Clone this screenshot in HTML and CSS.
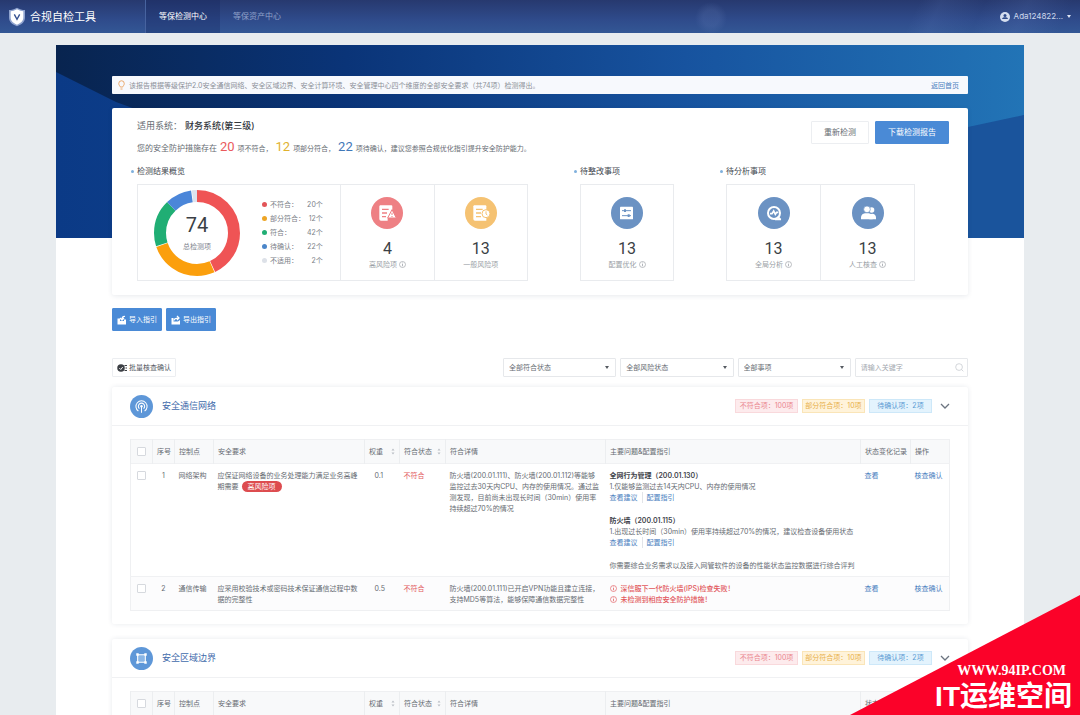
FILE: index.html
```html
<!DOCTYPE html>
<html lang="zh-CN">
<head>
<meta charset="utf-8">
<title>合规自检工具</title>
<link rel="stylesheet" href="styles.css">
</head>
<body>
<svg class="symbols" aria-hidden="true">
  <symbol id="info" viewBox="0 0 14 14"><circle cx="7" cy="7" r="6" fill="none" stroke="currentColor" stroke-width="1.3"/><path d="M7 6v4.5M7 3.2v1.5" stroke="currentColor" stroke-width="1.5"/></symbol>
  <symbol id="sort" viewBox="0 0 8 14"><path d="M1 5l3-4 3 4zM1 9l3 4 3-4z" fill="#b9bdc4"/></symbol>
  <symbol id="chevron" viewBox="0 0 10 10"><path d="M1 3l4 4 4-4" fill="none" stroke="#6c7480" stroke-width="1.3"/></symbol>
</svg>

<header class="topbar">
  <div class="brand">
    <svg class="brand-logo" viewBox="0 0 54 60" aria-hidden="true">
      <path d="M27 2C19 7 11 9 3 9v22c0 14 10 22 24 27 14-5 24-13 24-27V9c-8 0-16-2-24-7z" fill="#8fa3cf"/>
      <path d="M27 7c-7 4-13 5-19 6v18c0 11 7 17 19 22 12-5 19-11 19-22V13c-6-1-12-2-19-6z" fill="#fff"/>
      <path d="M19 22l8 15 8-15" fill="none" stroke="#34508f" stroke-width="4"/>
    </svg>
    <h1>合规自检工具</h1>
  </div>
  <nav class="nav">
    <a class="nav-item active" href="#">等保检测中心</a>
    <a class="nav-item" href="#">等保资产中心</a>
  </nav>
  <button class="user" type="button">
    <svg class="user-icon" viewBox="0 0 20 20" aria-hidden="true"><circle cx="10" cy="10" r="10" fill="#d5deef"/><circle cx="10" cy="7" r="3" fill="#2f4b8a"/><path d="M4 14c1-3 3-3.500 6-3.500s5 .5 6 3.500z" fill="#2f4b8a"/></svg>
    Ada124822...
    <span class="caret"></span>
  </button>
</header>

<main class="page">
  <svg class="hero" viewBox="0 0 968 193" preserveAspectRatio="none" aria-hidden="true">
    <defs>
      <linearGradient id="sky" x1="0" y1="0" x2="1" y2="0"><stop offset="0" stop-color="#08244f"/><stop offset=".3" stop-color="#0a3478"/><stop offset=".65" stop-color="#17539f"/><stop offset="1" stop-color="#2274b6"/></linearGradient>
      <linearGradient id="slope" x1="0" y1="0" x2="1" y2="0"><stop offset="0" stop-color="#0b3a86"/><stop offset="1" stop-color="#1a569f"/></linearGradient>
    </defs>
    <path d="M0 0h968v193H0z" fill="url(#sky)"/>
    <path d="M0 27l60 30 220 80h540l148-67v123H0z" fill="url(#slope)"/>
    <path d="M912 82l56-12v123h-56z" fill="#1a549c"/>
  </svg>

  <div class="notice">
    <svg class="bulb" viewBox="0 0 14 20" aria-hidden="true"><path d="M4.500 14c0-2-3-3-3-7a5.500 5.500 0 0 1 11 0c0 4-3 5-3 7zM5 18h4" fill="none" stroke="#e9a25e" stroke-width="1.800"/></svg>
    <p>该报告根据等级保护2.0安全通信网络、安全区域边界、安全计算环境、安全管理中心四个维度的全部安全要求（共74项）检测得出。</p>
    <a href="#">返回首页</a>
  </div>

  <section class="summary">
    <div class="summary-head">
      <div>
        <p class="system">适用系统：<strong>财务系统(第三级)</strong></p>
        <p class="result"><span class="lead">您的安全防护措施存在</span> <b class="red">20</b> 项不符合， <b class="gold">12</b> 项部分符合， <b class="blue">22</b> 项待确认，建议您参照合规优化指引提升安全防护能力。</p>
      </div>
      <div class="actions">
        <button class="btn" type="button">重新检测</button>
        <button class="btn primary" type="button">下载检测报告</button>
      </div>
    </div>

    <div class="groups">
      <section class="group group-overview">
        <h2>检测结果概览</h2>
        <div class="cells">
          <div class="cell overview">
            <div class="donut">
              <svg viewBox="0 0 86 86" aria-hidden="true">
                <g fill="none" stroke-width="12" transform="rotate(-90 43 43)">
                  <circle cx="43" cy="43" r="37" pathLength="360" stroke="#ef5455" stroke-dasharray="155 205"/>
                  <circle cx="43" cy="43" r="37" pathLength="360" stroke="#fb9f0d" stroke-dasharray="95 265" stroke-dashoffset="-156"/>
                  <circle cx="43" cy="43" r="37" pathLength="360" stroke="#20ae74" stroke-dasharray="64 296" stroke-dashoffset="-252"/>
                  <circle cx="43" cy="43" r="37" pathLength="360" stroke="#4b86d9" stroke-dasharray="36 324" stroke-dashoffset="-316"/>
                  <circle cx="43" cy="43" r="37" pathLength="360" stroke="#dde3ee" stroke-dasharray="7 353" stroke-dashoffset="-353"/>
                </g>
              </svg>
              <div class="donut-text"><b>74</b><span>总检测项</span></div>
            </div>
            <dl class="legend">
              <dt class="k-red">不符合：</dt><dd>20个</dd>
              <dt class="k-orange">部分符合：</dt><dd>12个</dd>
              <dt class="k-green">符合：</dt><dd>42个</dd>
              <dt class="k-blue">待确认：</dt><dd>22个</dd>
              <dt class="k-gray">不适用：</dt><dd>2个</dd>
            </dl>
          </div>
          <div class="cell">
            <svg class="cell-icon" viewBox="0 0 96 96" aria-hidden="true"><circle cx="48" cy="48" r="48" fill="#ee8084"/><path d="M27 25h34a3 3 0 0 1 3 3v10L50 63v8H30q-5 0-5-5V28z" fill="#fff"/><path d="M33 37h20M33 48h15M33 59h12" stroke="#ee8084" stroke-width="4"/><path d="M63 38l13 25H50z" fill="#fff" stroke="#ee8084" stroke-width="3" stroke-linejoin="round"/><path d="M63 47v7M63 57v3" stroke="#ee8084" stroke-width="3"/></svg>
            <b>4</b><span class="label">高风险项 <svg class="info"><use href="#info"/></svg></span>
          </div>
          <div class="cell">
            <svg class="cell-icon" viewBox="0 0 96 96" aria-hidden="true"><circle cx="48" cy="48" r="48" fill="#f5c272"/><path d="M27 25h34a3 3 0 0 1 3 3v43H30q-5 0-5-5V28z" fill="#fff"/><path d="M33 37h20M33 48h15M33 59h15" stroke="#f5c272" stroke-width="4"/><circle cx="63" cy="50" r="12" fill="#fff" stroke="#f5c272" stroke-width="3"/><path d="M63 43v8l4 3" fill="none" stroke="#f5c272" stroke-width="3"/></svg>
            <b>13</b><span class="label">一般风险项</span>
          </div>
        </div>
      </section>

      <section class="group group-fix">
        <h2>待整改事项</h2>
        <div class="cells">
          <div class="cell">
            <svg class="cell-icon" viewBox="0 0 96 96" aria-hidden="true"><circle cx="48" cy="48" r="48" fill="#6b92c3"/><rect x="27" y="29" width="39" height="38" rx="2" fill="#fff"/><path d="M33 41h27M33 56h27" stroke="#6b92c3" stroke-width="3"/><path d="M42 37v8M53 52v8" stroke="#6b92c3" stroke-width="6"/></svg>
            <b>13</b><span class="label">配置优化 <svg class="info"><use href="#info"/></svg></span>
          </div>
        </div>
      </section>

      <section class="group group-analyse">
        <h2>待分析事项</h2>
        <div class="cells">
          <div class="cell">
            <svg class="cell-icon" viewBox="0 0 96 96" aria-hidden="true"><circle cx="48" cy="48" r="48" fill="#6b92c3"/><circle cx="48" cy="48" r="18" fill="none" stroke="#fff" stroke-width="6"/><path d="M59 59l9 9M51 67h18" stroke="#fff" stroke-width="5"/><path d="M36 50h6l5-8 5 10 4-6h5" fill="none" stroke="#fff" stroke-width="5"/></svg>
            <b>13</b><span class="label">全局分析 <svg class="info"><use href="#info"/></svg></span>
          </div>
          <div class="cell">
            <svg class="cell-icon" viewBox="0 0 96 96" aria-hidden="true"><circle cx="48" cy="48" r="48" fill="#6b92c3"/><circle cx="59" cy="39" r="8" fill="#fff"/><path d="M52 67V52q18-6 20 9v6z" fill="#fff"/><circle cx="45" cy="37" r="10" fill="#fff" stroke="#6b92c3" stroke-width="2"/><path d="M27 67v-6q1-10 12-12h11q11 2 12 12v6z" fill="#fff"/></svg>
            <b>13</b><span class="label">人工核查 <svg class="info"><use href="#info"/></svg></span>
          </div>
        </div>
      </section>
    </div>
  </section>

  <div class="guides">
    <button class="btn primary guide" type="button"><svg viewBox="0 0 20 20" aria-hidden="true"><path d="M1 7h5v5h8V9h4v10H1z" fill="#fff"/><path d="M16 3q-6-1-6 6M6 6l4 4 4-4" fill="none" stroke="#fff" stroke-width="2.500"/></svg>导入指引</button>
    <button class="btn primary guide" type="button"><svg viewBox="0 0 20 20" aria-hidden="true"><path d="M1 6h4v7h9l4-3v9H1z" fill="#fff"/><path d="M6 11q0-5 9-5M12 2l4 4-4 4" fill="none" stroke="#fff" stroke-width="2.500"/></svg>导出指引</button>
  </div>

  <div class="filters">
    <button class="btn batch" type="button"><svg viewBox="0 0 20 16" aria-hidden="true"><circle cx="8" cy="8" r="7.500" fill="#3c3f44"/><path d="M4.500 8l3 3 4-5" fill="none" stroke="#fff" stroke-width="1.800"/><path d="M15 3h5M17 8h3M15 13h5" stroke="#3c3f44" stroke-width="2"/></svg>批量核查确认</button>
    <div class="fields">
      <label class="select"><select aria-label="符合状态"><option>全部符合状态</option></select></label>
      <label class="select"><select aria-label="风险状态"><option>全部风险状态</option></select></label>
      <label class="select"><select aria-label="事项"><option>全部事项</option></select></label>
      <label class="search"><input type="text" aria-label="关键字" placeholder="请输入关键字"><svg viewBox="0 0 20 20" aria-hidden="true"><circle cx="9" cy="9" r="7.500" fill="none" stroke="#c3c7cd" stroke-width="1.600"/><path d="M14.500 14.500l4 4" stroke="#c3c7cd" stroke-width="1.600"/></svg></label>
    </div>
  </div>

  <section class="panel">
    <header class="panel-head">
      <svg class="panel-icon" viewBox="0 0 66 66" aria-hidden="true"><circle cx="33" cy="33" r="33" fill="#5e97d8"/><g fill="none" stroke="#fff" stroke-width="3"><path d="M24 46a16 16 0 1 1 18 0"/><path d="M27 39a9 9 0 1 1 12 0"/><path d="M33 33v18"/></g><circle cx="33" cy="32" r="3.500" fill="#fff"/></svg>
      <h2>安全通信网络</h2>
      <span class="tag tag-red">不符合项：100项</span>
      <span class="tag tag-gold">部分符合项：10项</span>
      <span class="tag tag-blue">待确认项：2项</span>
      <button class="toggle" type="button" aria-label="收起"><svg><use href="#chevron"/></svg></button>
    </header>
    <table>
      <colgroup><col class="c-check"><col class="c-no"><col class="c-point"><col class="c-need"><col class="c-weight"><col class="c-state"><col class="c-detail"><col><col class="c-log"><col class="c-op"></colgroup>
      <thead>
        <tr><th class="mid"><input type="checkbox" aria-label="全选"></th><th>序号</th><th>控制点</th><th>安全要求</th><th><span class="sortable">权重<svg><use href="#sort"/></svg></span></th><th><span class="sortable">符合状态<svg><use href="#sort"/></svg></span></th><th>符合详情</th><th>主要问题&amp;配置指引</th><th>状态变化记录</th><th>操作</th></tr>
      </thead>
      <tbody>
        <tr>
          <td class="mid"><input type="checkbox" aria-label="选择第1项"></td>
          <td class="mid">1</td>
          <td>网络架构</td>
          <td>应保证网络设备的业务处理能力满足业务高峰<div class="flagged">期需要<span class="pill">高风险项</span></div></td>
          <td class="weight">0.1</td>
          <td class="bad">不符合</td>
          <td>防火墙(200.01.111)、防火墙(200.01.112)等能够<br>监控过去30天内CPU、内存的使用情况。通过监<br>测发现，目前尚未出现长时间（30min）使用率<br>持续超过70%的情况</td>
          <td>
            <div class="issue"><strong>全网行为管理（200.01.130）</strong><p>1.仅能够监测过去14天内CPU、内存的使用情况</p><p class="links"><a href="#">查看建议</a><a href="#">配置指引</a></p></div>
            <div class="issue"><strong>防火墙（200.01.115）</strong><p>1.出现过长时间（30min）使用率持续超过70%的情况，建议检查设备使用状态</p><p class="links"><a href="#">查看建议</a><a href="#">配置指引</a></p></div>
            <p>你需要综合业务需求以及接入网管软件的设备的性能状态监控数据进行综合评判</p>
          </td>
          <td><a href="#">查看</a></td>
          <td><a href="#">核查确认</a></td>
        </tr>
        <tr class="alt">
          <td class="mid"><input type="checkbox" aria-label="选择第2项"></td>
          <td class="mid">2</td>
          <td>通信传输</td>
          <td>应采用校验技术或密码技术保证通信过程中数据的完整性</td>
          <td class="weight">0.5</td>
          <td class="bad">不符合</td>
          <td>防火墙(200.01.111)已开启VPN功能且建立连接，<br>支持MD5等算法，能够保障通信数据完整性</td>
          <td class="error"><p><svg class="info"><use href="#info"/></svg>深信服下一代防火墙(IPS)检查失败！</p><p><svg class="info"><use href="#info"/></svg>未检测到相应安全防护措施！</p></td>
          <td><a href="#">查看</a></td>
          <td><a href="#">核查确认</a></td>
        </tr>
      </tbody>
    </table>
  </section>

  <section class="panel">
    <header class="panel-head">
      <svg class="panel-icon" viewBox="0 0 66 66" aria-hidden="true"><circle cx="33" cy="33" r="33" fill="#5e97d8"/><path d="M22 22h22v22H22z" fill="#8ab6e6" stroke="#fff" stroke-width="3"/><path d="M18 18h7v7h-7zM41 18h7v7h-7zM18 41h7v7h-7zM41 41h7v7h-7z" fill="#fff"/></svg>
      <h2>安全区域边界</h2>
      <span class="tag tag-red">不符合项：100项</span>
      <span class="tag tag-gold">部分符合项：10项</span>
      <span class="tag tag-blue">待确认项：2项</span>
      <button class="toggle" type="button" aria-label="收起"><svg><use href="#chevron"/></svg></button>
    </header>
    <table>
      <colgroup><col class="c-check"><col class="c-no"><col class="c-point"><col class="c-need"><col class="c-weight"><col class="c-state"><col class="c-detail"><col><col class="c-log"><col class="c-op"></colgroup>
      <thead>
        <tr><th class="mid"><input type="checkbox" aria-label="全选"></th><th>序号</th><th>控制点</th><th>安全要求</th><th><span class="sortable">权重<svg><use href="#sort"/></svg></span></th><th><span class="sortable">符合状态<svg><use href="#sort"/></svg></span></th><th>符合详情</th><th>主要问题&amp;配置指引</th><th>状态变化记录</th><th>操作</th></tr>
      </thead>
    </table>
  </section>
</main>

<aside class="stamp">
  <span class="stamp-url">WWW.94IP.COM</span>
  <span class="stamp-name">IT运维空间</span>
</aside>
</body>
</html>
```
FILE: styles.css
```css
* { box-sizing: border-box; }

html { background: #e8ecef; }

body {
  display: flex;
  flex-direction: column;
  height: 100vh;
  margin: 0;
  overflow: hidden;
  color: #666b72;
  font: 7px/11px Inter, "Noto Sans CJK SC", sans-serif;
}

h1, h2, p, dl, dd { margin: 0; }
h1, h2 { font-weight: 400; }
a { color: #4a80c0; text-decoration: none; }
button, input, select { margin: 0; font: inherit; color: inherit; }
button { display: flex; align-items: center; justify-content: center; cursor: pointer; }
.symbols { display: none; }

/* Top bar */
.topbar {
  display: flex;
  flex: none;
  height: 33px;
  color: #cdd8ec;
  background:
    linear-gradient(115deg, transparent 84%, rgba(120, 150, 215, .1) 86%, transparent 90%, rgba(120, 150, 215, .12) 94%, transparent 98%),
    radial-gradient(circle at 711px 18px, rgba(130, 155, 210, .14) 0 8px, transparent 16px),
    linear-gradient(#27396f, #2f4b8b 60%, #335795);
}
.brand { display: flex; align-items: center; width: 145px; padding-left: 8px; gap: 4px; }
.brand-logo { width: 18px; height: 20px; }
.brand h1 { font-size: 11px; line-height: 16px; color: #fff; }
.nav { display: flex; }
.nav-item { display: flex; align-items: center; padding: 0 13px; font-size: 8px; color: #8fa0c9; }
.nav-item.active { color: #fff; background: rgba(20, 38, 92, .3); border-left: 1px solid #47639f; }
.user { gap: 4px; margin-left: auto; padding: 0 9px; border: 0; background: none; font-size: 8px; }
.user-icon { width: 10px; height: 10px; }
.caret { border: 2px solid transparent; border-top: 3px solid #dfe6f4; border-bottom: 0; }

/* Page */
.page {
  position: relative;
  flex: 1;
  margin: 12px 56px 0;
  padding: 31px 56px 0;
  background: #fff;
  overflow: hidden;
}
.hero { position: absolute; top: 0; left: 0; width: 100%; height: 193px; }

.notice {
  position: relative;
  display: flex;
  align-items: center;
  height: 18px;
  padding: 0 9px 0 6px;
  gap: 4px;
  border-radius: 1px;
  background: #f7f9fd;
  color: #8b9098;
}
.notice a { margin-left: auto; }
.bulb { width: 7px; height: 10px; }

.summary {
  position: relative;
  margin-top: 14px;
  padding: 9px 19px 14px 25px;
  border-radius: 2px;
  background: #fff;
  box-shadow: 0 1px 5px rgba(30, 50, 80, .1);
}
.summary-head { display: flex; justify-content: space-between; }
.system { font-size: 9px; line-height: 18px; }
.system strong { margin-left: 3px; color: #33373d; font-weight: 500; }
.result { margin-top: 3px; line-height: 18px; }
.result .lead { font-size: 8px; }
.result b { margin: 0 1px; font: 13px/18px Roboto, sans-serif; }
.red { color: #ea5a5c; }
.gold { color: #e0b12e; }
.blue { color: #3f78b8; }
.actions { display: flex; gap: 6px; padding-top: 4px; }

.btn { border: 1px solid #eceef1; border-radius: 1px; background: #fff; padding: 0 12px; }
.btn.primary { border-color: #4a8ad6; background: #4a8ad6; color: #fff; }
.actions .btn { height: 23px; font-size: 8px; }

.groups { display: flex; gap: 52px; margin-top: 5px; padding-right: 34px; }
.group-overview { flex: 391; }
.group-fix { flex: 94; }
.group-analyse { flex: 189; }
.group h2 {
  display: flex;
  align-items: center;
  gap: 3px;
  margin: 0 0 5px -6px;
  font-size: 8px;
  line-height: 16px;
  color: #44484f;
}
.group h2::before { content: ""; width: 3px; height: 3px; border-radius: 50%; background: #7fb0dd; }
.cells { display: flex; height: 97px; border: 1px solid #e9ebee; }
.cell { display: flex; flex: 1; flex-direction: column; align-items: center; padding-top: 12px; }
.cell + .cell { border-left: 1px solid #e9ebee; }
.cell-icon { width: 32px; height: 32px; }
.cell > b { margin-top: 10px; font: 16px/20px Roboto, sans-serif; color: #3b3f45; }
.label { display: flex; align-items: center; gap: 2px; color: #9a9fa6; }
.info { width: 7px; height: 7px; }

.cell.overview { flex: 0 0 52%; flex-direction: row; padding: 0 16px; gap: 22px; }
.donut { display: grid; width: 86px; height: 86px; }
.donut > * { grid-area: 1 / 1; }
.donut-text { display: flex; flex-direction: column; align-items: center; justify-content: center; gap: 4px; color: #80858d; }
.donut-text b { font: 20px/24px Roboto, sans-serif; color: #3b3f45; }
.legend { display: grid; grid-template-columns: auto auto; column-gap: 2px; line-height: 14px; color: #7b8087; }
.legend dt { display: flex; align-items: center; gap: 3px; }
.legend dt::before { content: ""; width: 5px; height: 5px; border-radius: 50%; background: var(--dot); }
.legend dd { text-align: right; }
.k-red { --dot: #e25558; }
.k-orange { --dot: #eda526; }
.k-green { --dot: #20ae74; }
.k-blue { --dot: #4b86c9; }
.k-gray { --dot: #dde1e8; }

/* Toolbar */
.guides { display: flex; gap: 4px; margin-top: 13px; }
.guide { height: 23px; padding: 0 4px; gap: 2px; }
.guide svg { width: 10px; height: 10px; }
.filters { display: flex; justify-content: space-between; margin-top: 27px; }
.batch { height: 19px; padding: 0 4px; gap: 2px; color: #54585f; }
.batch svg { width: 10px; height: 8px; }
.fields { display: flex; gap: 4px; width: 465px; }
.select, .search { position: relative; flex: 1; height: 19px; }
.select select, .search input {
  width: 100%;
  height: 100%;
  padding: 0 5px;
  border: 1px solid #e6e8eb;
  border-radius: 1px;
  outline: 0;
  background: #fff;
  appearance: none;
}
.select::after {
  content: "";
  position: absolute;
  top: 8px;
  right: 7px;
  border: 2px solid transparent;
  border-top: 3px solid #555a61;
  border-bottom: 0;
  pointer-events: none;
}
.search input::placeholder { color: #a3a8af; }
.search svg { position: absolute; top: 5px; right: 4px; width: 9px; height: 9px; }

/* Panels */
.panel {
  margin-top: 10px;
  padding-bottom: 13px;
  border-radius: 2px;
  background: #fff;
  box-shadow: 0 0 5px rgba(30, 50, 80, .1);
}
.panel + .panel { margin-top: 15px; }
.panel-head { display: flex; align-items: center; gap: 4px; height: 39px; padding: 0 14px 0 18px; border-bottom: 1px solid #f0f1f3; }
.panel-icon { width: 23px; height: 23px; }
.panel-head h2 { margin: 0 auto 0 5px; font-size: 9px; line-height: 14px; color: #3f6bab; }
.tag { width: 63px; border: 1px solid; line-height: 12px; text-align: center; white-space: nowrap; }
.tag-red { color: #ea868d; background: #fdebed; border-color: #f9d9dc; }
.tag-gold { color: #e8b04a; background: #fff3da; border-color: #fae5b8; }
.tag-blue { color: #5a9ad3; background: #e3f3fd; border-color: #cde8f9; }
.toggle { width: 18px; height: 18px; padding: 0; border: 0; background: none; }
.toggle svg { width: 10px; height: 10px; }

table {
  width: calc(100% - 36px);
  margin: 13px 18px 0;
  border: 1px solid #eff0f2;
  border-collapse: collapse;
  table-layout: fixed;
}
.c-check, .c-no { width: 22px; }
.c-point { width: 39px; }
.c-need { width: 151px; }
.c-weight { width: 35px; }
.c-state { width: 46px; }
.c-detail { width: 160px; }
.c-log { width: 50px; }
.c-op { width: 39px; }
th, td { padding: 6px 4px 5px; text-align: left; vertical-align: top; }
th { padding-bottom: 6px; border-left: 1px solid #eceef0; background: #f8f9fa; font-weight: 400; white-space: nowrap; }
td { border-top: 1px solid #f0f1f3; }
.alt td { background: #fcfcfd; }
th.mid, td.mid { padding-left: 0; padding-right: 0; text-align: center; }
td.weight { padding-left: 10px; }
.sortable { display: flex; align-items: center; justify-content: space-between; }
.sortable svg { width: 4px; height: 7px; }
input[type="checkbox"] { display: block; width: 9px; height: 9px; margin: 1px auto 0; border: 1px solid #d6d9de; border-radius: 1px; background: #fff; appearance: none; }
.bad, .error { color: #e2585c; }
.flagged { display: flex; align-items: center; gap: 3px; }
.pill { padding: 0 6px; border-radius: 6px; background: #dd4c4f; color: #fff; }
.issue { margin-bottom: 12px; }
.issue strong { color: #3f444b; font-weight: 600; }
.links { display: flex; }
.links a + a { margin-left: 4px; padding-left: 4px; border-left: 1px solid #e2e4e8; }
.error p { display: flex; align-items: center; gap: 4px; font-weight: 500; }

/* Corner stamp */
.stamp {
  position: fixed;
  right: 0;
  bottom: 0;
  display: flex;
  flex-direction: column;
  align-items: flex-end;
  justify-content: flex-end;
  width: 230px;
  height: 120px;
  padding-right: 8px;
  background: #fb0229;
  clip-path: polygon(100% 0, 100% 100%, 0 100%);
  color: #fff;
  font-weight: 700;
}
.stamp-url { padding-right: 6px; font: 700 14px/16px "Liberation Serif", serif; }
.stamp-name { font: 700 28px/36px "Liberation Sans", "Noto Sans CJK SC", sans-serif; }
```
